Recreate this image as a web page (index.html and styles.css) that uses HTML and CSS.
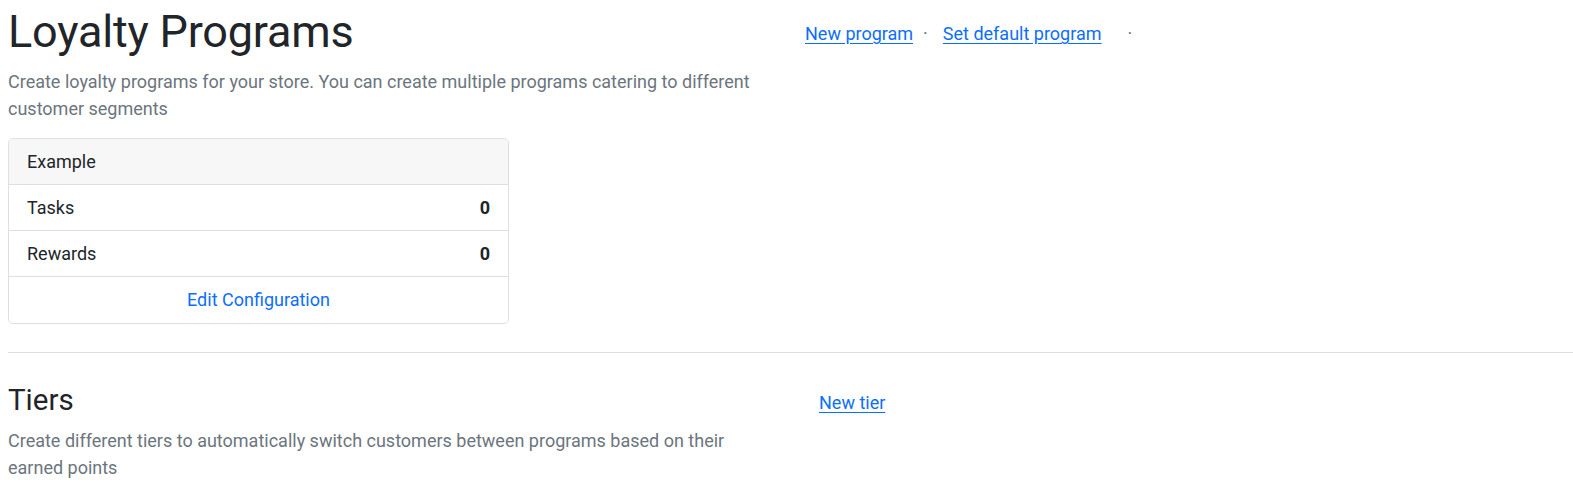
FILE: index.html
```html
<!DOCTYPE html>
<html lang="en">
<head>
<meta charset="utf-8">
<title>Loyalty Programs</title>
<link rel="stylesheet" href="styles.css">
</head>
<body>
<main class="page">
  <section class="section">
    <div class="section-main">
      <h1 class="title">Loyalty Programs</h1>
      <p class="desc">Create loyalty programs for your store. You can create multiple programs catering to different customer segments</p>
      <div class="card">
        <div class="card-header">Example</div>
        <div class="card-row"><span>Tasks</span><strong>0</strong></div>
        <div class="card-row"><span>Rewards</span><strong>0</strong></div>
        <div class="card-footer"><a href="#" class="card-link">Edit Configuration</a></div>
      </div>
    </div>
    <div class="actions actions-programs">
      <a href="#" class="action-link">New program</a><span class="sep">·</span><a href="#" class="action-link">Set default program</a><span class="sep sep-trail">·</span>
    </div>
  </section>

  <hr class="divider">

  <section class="section">
    <div class="section-main">
      <h2 class="subtitle">Tiers</h2>
      <p class="desc">Create different tiers to automatically switch customers between programs based on their earned points</p>
    </div>
    <div class="actions actions-tiers">
      <a href="#" class="action-link">New tier</a>
    </div>
  </section>
</main>
</body>
</html>
```
FILE: styles.css
```css
* { box-sizing: border-box; }

html, body {
  margin: 0;
  background: #ffffff;
}

body {
  font-family: Roboto, "Liberation Sans", Arial, sans-serif;
  font-size: 18px;
  line-height: 27px;
  color: #212529;
}

.page {
  padding: 5px 0 0 8px;
}

.section {
  display: grid;
  grid-template-columns: 796px 1fr;
  align-items: start;
}

.title {
  margin: 0 0 9px;
  font-size: 45px;
  line-height: 54px;
  font-weight: 400;
  letter-spacing: -0.2px;
}

.subtitle {
  margin: 0 0 9px;
  font-size: 29.5px;
  line-height: 36px;
  font-weight: 400;
}

.desc {
  margin: 0 0 16px;
  max-width: 758px;
  color: #6c757d;
}

.card {
  width: 501px;
  border: 1px solid #dfdfdf;
  border-radius: 5px;
  overflow: hidden;
}

.card-header {
  padding: 9px 18px;
  background: #f7f7f7;
  border-bottom: 1px solid #dfdfdf;
}

.card-row {
  display: flex;
  justify-content: space-between;
  padding: 9px 18px;
  border-bottom: 1px solid #dfdfdf;
}

.card-row strong {
  font-weight: 700;
}

.card-footer {
  padding: 9px 18px 10px;
  text-align: center;
}

.card-link {
  color: #0d6efd;
  text-decoration: none;
}

.actions {
  display: flex;
  align-items: baseline;
}

.actions-programs {
  margin-top: 15px;
  padding-left: 1px;
}

.actions-tiers {
  margin-top: 7px;
  padding-left: 15px;
}

.action-link {
  color: #0d6efd;
  text-decoration: underline;
  text-underline-offset: 3px;
}

.sep {
  color: #6c757d;
  margin: 0 15px 0 10px;
}

.sep-trail {
  margin-left: 26px;
}

.divider {
  margin: 28px 0 29px;
  border: 0;
  border-top: 1px solid #dedede;
  height: 0;
}
```
